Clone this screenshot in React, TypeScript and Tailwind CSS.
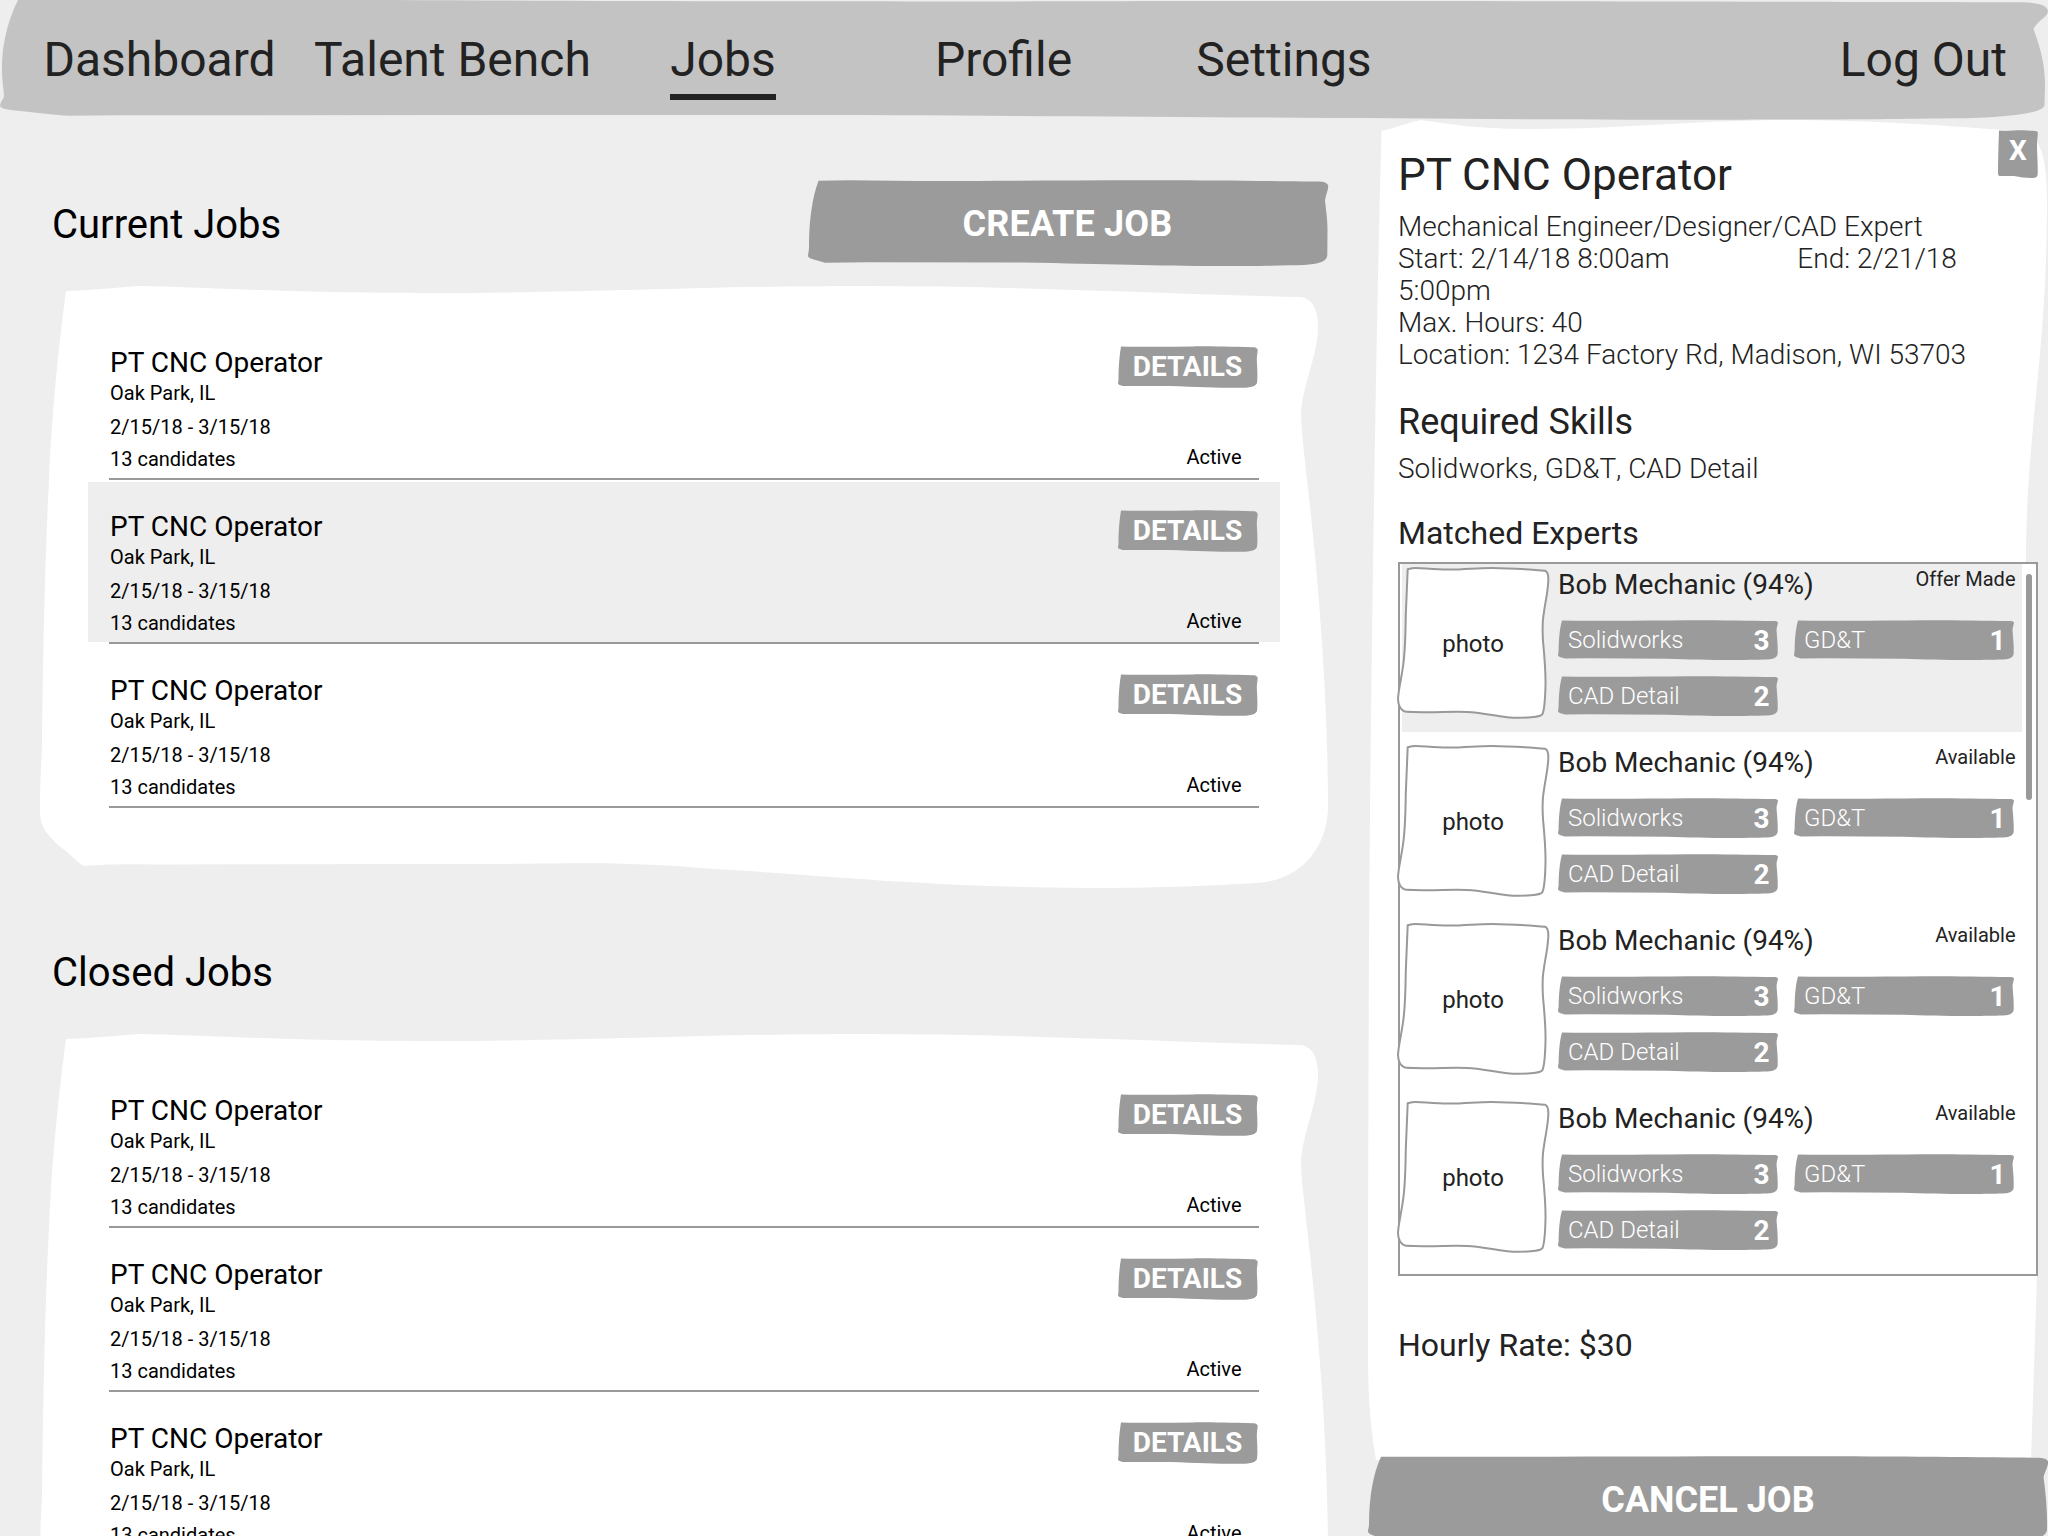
import React from "react";

type SketchProps = { w: number; h: number; d: string; className: string };

/* Hand-drawn, slightly wobbly outline that fills its relative parent. */
function Sketch({ w, h, d, className }: SketchProps) {
  return (
    <svg
      aria-hidden="true"
      viewBox={`0 0 ${w} ${h}`}
      preserveAspectRatio="none"
      className={`pointer-events-none absolute inset-0 h-full w-full overflow-visible ${className}`}
    >
      <path d={d} />
    </svg>
  );
}

const SHAPES = {
  header:
    "M20 -4 C5 25 2 50 2 70 C2 85 5 93 3.5 98 C2 101 0 103 0 106 C1 109 10 110 20 111 C40 113 55 115 69 115.7 L120 115.2 L700 115 C1100 115 1350 119.5 1740 119.7 C1850 119.5 1910 119 1974 118 C2020 116 2044 112 2044.5 105 C2044.5 98 2045 92 2045 85 C2045 60 2038 42 2033.5 29 C2037 21 2048 17 2048 11 C2047 5 2038 2.5 2020 2.3 C1800 2 1400 0.6 1100 1.3 C700 2 500 0.5 200 -1 Z",
  card:
    "M26 5 C60 4 80 1 100 0 C160 1 250 7 390 7 C560 7 660 0 824 0 C980 0 1130 8 1260 11 C1274 12 1278 27 1278 40 C1278 70 1261 103 1261 130 C1262 150 1264 165 1267 194 C1276 270 1288 400 1288 520 C1288 560 1262 595 1216 597 C1150 601 1100 602 1048 602 C880 601 770 588 660 582 C570 575 530 578 451 578 L110 578.5 C70 578 60 579 45 580 C38 578 31 568 18 559 C8 549 0 542 0 525 C0 500 1 480 2 461 C3 370 5 270 9 194 C12 120 20 50 26 5 Z",
  create:
    "M10.5 0.8 C4 18 1 42 1 66 C1 72 0 74 0 76 C1 79 5 79 17 82.7 L60 82.3 L215 82.5 C300 84 350 86 410 86 C450 86 475 85.5 496 85 C510 84 519 82 519.3 75 L519.5 50 C519.5 40 518 30 517 20.5 C518 14 521 8 520 5 C518 2 515 1.8 510 1.6 C450 1 400 0.2 340 0.3 C230 0.2 130 2 42 0.3 Z",
  details:
    "M3 0.4 C1 12 0.5 25 0.5 34 L0 37 C0 39 3 39.5 4.5 40 L52 40 C80 41 105 42 120 41.8 C130 41.8 137 41.5 139 37 C140 30 139 20 138.8 13 C139 8 140 5 139.5 3 C138 1.5 137 1.2 135 1.2 C110 0.8 90 0.2 75 0.4 C50 1 25 1 3 0.4 Z",
  chip:
    "M4 0.4 C1.5 9 0.8 20 0.6 31 L0 35 C0 37 4 37.5 7 38.6 L30 38.2 L109 38.7 C130 39.5 150 40 175 40 C190 40 205 39.8 212 39.3 C217 38.5 219.5 37 219.7 33 C220 25 219 17 218.5 10 C219 6 220 4 220 2.5 C219 1.2 218 1 215 1 C190 0.8 160 0.2 130 0.3 C90 0.6 50 1 4 0.4 Z",
  close:
    "M1 0.4 C0.5 15 0 30 0 44 L1 46 L16 46 C22 47 28 48 33 48 C37 48 39.5 47.5 39.7 44 C40 34 39 24 39 14 C39.3 8 40 5 39.7 2 L38 1 C30 0.5 25 0 20 0.3 C12 1 6 0.8 1 0.4 Z",
  panel:
    "M13.5 11 C30 7 42 2 53 0 C85 5 115 9 165 9 C260 9 330 0 431 0 C520 1 580 6 650 11 C670 13 679 30 679 80 C679 240 658 310 658 442 C660 640 669 900 669 1156 L663 1340 L8 1340 C3 1310 0 1280 0 1235 C0 1020 1 760 3 600 C6 360 9 180 13.5 11 Z",
  cancel:
    "M13 0.8 C5 18 1 42 1 68 C1 72 0 73 0 76 C2 79 7 80 10 81 L240 83 C340 84 400 86 520 86 C580 86 640 86 655 84 C672 83 678 80 679 74 C679.5 58 678 38 675.5 21 C677 15 681 9 680 5 C678 2.5 675 2 670 1.8 C600 1 500 0.2 400 0.3 C270 0.4 150 1 13 0.8 Z",
  photo:
    "M10.7 2.3 C14 1.3 16 0.8 19 0.9 C30 1.5 40 2.7 52 2.6 C70 2.4 80 0.8 95 0.9 C115 1 132 2.6 148 3.7 C151 4.5 151.5 9 151.3 14 C150.5 28 148 36 147 45 C145 55 145.5 66 146 74 C147.5 90 148.8 105 148.5 118 C148.2 132 147.5 142 145.5 147 C144.5 149.3 140 149.8 134 150.3 C125 151 118 151 110 150.2 C96 148.8 84 145.4 70 145 C55 144.4 42 145.4 26 145.2 C18 144.8 12 145.3 8 144.6 C4 143 1.2 139 1 132 C1.5 121 5.5 108 7 91 C8.5 76 8.5 62 8.8 48 Z",
};

const TABS = [
  { label: "Dashboard", cell: "w-[259px]" },
  { label: "Talent Bench", cell: "w-[327px]" },
  { label: "Jobs", cell: "w-[214px]", active: true },
  { label: "Profile", cell: "w-[347px]" },
  { label: "Settings", cell: "w-[214px]" },
];

function Header() {
  return (
    <header className="relative h-[120px] w-full shrink-0 text-[48px] leading-[56px] text-[#222]">
      <Sketch w={2048} h={120} d={SHAPES.header} className="fill-[#c3c3c3]" />
      <nav className="relative flex pt-8 pr-[41px] pl-[30px]">
        {TABS.map((t) => (
          <div key={t.label} className={`flex justify-center whitespace-nowrap ${t.cell}`}>
            <a className={t.active ? "border-b-[6px] border-[#222] pb-1.5" : ""}>{t.label}</a>
          </div>
        ))}
        <a className="ml-auto">Log Out</a>
      </nav>
    </header>
  );
}

function JobRow({ selected = false }: { selected?: boolean }) {
  return (
    <li className="mb-0.5">
      <div className={`flex h-40 justify-between pr-[21px] pl-[22px] pt-7 ${selected ? "bg-[#eee]" : ""}`}>
        <div className="text-[20px] leading-7">
          <h3 className="pt-px text-[28px] leading-8">PT CNC Operator</h3>
          <p>Oak Park, IL</p>
          <p className="mt-1.5">2/15/18 - 3/15/18</p>
          <p className="mt-1">13 candidates</p>
        </div>
        <div className="flex flex-col items-end">
          <button className="relative mr-px h-[42px] w-[140px] pr-px text-[28px] leading-[42px] font-bold text-white">
            <Sketch w={140} h={42} d={SHAPES.details} className="fill-[#9b9b9b]" />
            <span className="relative">DETAILS</span>
          </button>
          <p className="mt-[55px] mr-[17.5px] text-[20px] leading-7">Active</p>
        </div>
      </div>
      <div className="mx-[21px] h-0.5 bg-[#999]" />
    </li>
  );
}

function JobCard({ selectedIndex = -1 }: { selectedIndex?: number }) {
  return (
    <section className="relative ml-10 h-[602px] w-[1288px] shrink-0">
      <Sketch w={1288} h={602} d={SHAPES.card} className="fill-white" />
      <ul className="relative ml-12 w-[1192px] pt-8">
        {[0, 1, 2].map((i) => (
          <JobRow key={i} selected={i === selectedIndex} />
        ))}
      </ul>
    </section>
  );
}

function Chip({ name, level }: { name: string; level: number }) {
  return (
    <div className="relative flex h-10 w-[220px] justify-between pr-[8.5px] pl-[10px] text-white">
      <Sketch w={220} h={40} d={SHAPES.chip} className="fill-[#9b9b9b]" />
      <span className="relative text-[24px] leading-10 font-light">{name}</span>
      <span className="relative text-[28px] leading-[41px] font-bold">{level}</span>
    </div>
  );
}

function Expert({ status, highlighted = false }: { status: string; highlighted?: boolean }) {
  return (
    <li className={`mb-2.5 ml-0.5 flex h-[168px] w-[620px] ${highlighted ? "bg-[#eee]" : ""}`}>
      <div className="relative mt-[3px] -ml-[5px] h-[153px] w-[152px] text-center text-[24px] leading-[155px]">
        <Sketch w={152} h={153} d={SHAPES.photo} className="fill-white stroke-[#999] stroke-2" />
        <span className="relative">photo</span>
      </div>
      <div className="ml-[9px] flex-1">
        <div className="flex h-14 justify-between pr-[6.5px]">
          <h4 className="pt-[3px] text-[28px] leading-9">Bob Mechanic (94%)</h4>
          <span className="pt-px text-[20px] leading-7">{status}</span>
        </div>
        <div className="flex flex-wrap gap-4">
          <Chip name="Solidworks" level={3} />
          <Chip name="GD&T" level={1} />
          <Chip name="CAD Detail" level={2} />
        </div>
      </div>
    </li>
  );
}

function JobPanel() {
  return (
    <aside className="relative flex h-[1416px] w-[680px] shrink-0 flex-col text-[#222]">
      <Sketch w={680} h={1416} d={SHAPES.panel} className="fill-white" />
      <div className="relative pt-2.5 pr-2.5 pl-[30px]">
        <div className="flex h-[71px] justify-between">
          <h1 className="pt-[19px] text-[44px] leading-[52px]">PT CNC Operator</h1>
          <button className="relative h-12 w-10 pb-[7px] text-[28px] leading-[41px] font-bold text-white">
            <Sketch w={40} h={48} d={SHAPES.close} className="fill-[#9b9b9b]" />
            <span className="relative">X</span>
          </button>
        </div>
        <div className="mt-2.5 text-[28px] leading-8 font-light">
          <p>Mechanical Engineer/Designer/CAD Expert</p>
          <p>
            Start: 2/14/18 8:00am <span className="inline-block w-[121px]" />
            End: 2/21/18 5:00pm
          </p>
          <p>Max. Hours: 40</p>
          <p>Location: 1234 Factory Rd, Madison, WI 53703</p>
        </div>
        <h2 className="mt-[29px] text-[36px] leading-[44px]">Required Skills</h2>
        <p className="mt-[9px] text-[28px] leading-8 font-light">
          Solidworks, GD&amp;<span className="tracking-[-0.3px]">T</span>, CAD Detail
        </p>
        <h2 className="mt-7 text-[32px] leading-10">Matched Experts</h2>
        <div className="relative mt-[9px] h-[714px] w-[640px] border-2 border-[#999] bg-white">
          <ul>
            <Expert status="Offer Made" highlighted />
            <Expert status="Available" />
            <Expert status="Available" />
            <Expert status="Available" />
          </ul>
          <div className="absolute top-2.5 right-1 h-[226px] w-1.5 rounded-full bg-[#999]" />
        </div>
        <p className="mt-[49px] text-[32px] leading-10">Hourly Rate: $30</p>
      </div>
      <button className="relative mt-auto h-20 w-full pt-2 text-[36px] leading-[72px] font-bold text-white">
        <Sketch w={680} h={80} d={SHAPES.cancel} className="fill-[#9b9b9b]" />
        <span className="relative">CANCEL JOB</span>
      </button>
    </aside>
  );
}

export default function App() {
  return (
    <div className="flex h-[1536px] w-[2048px] flex-col overflow-hidden bg-[#eee] font-['Roboto',sans-serif] text-black">
      <Header />
      <div className="flex min-h-0 flex-1">
        <main className="flex w-[1368px] shrink-0 flex-col pt-[60px]">
          <div className="flex h-[86px] shrink-0 justify-between pr-10 pl-[52px]">
            <h2 className="pt-[21px] text-[40px] leading-[48px]">Current Jobs</h2>
            <button className="relative h-[86px] w-[520px] pt-0.5 pr-px text-[36px] leading-[84px] font-bold tracking-[0.15px] text-white">
              <Sketch w={520} h={86} d={SHAPES.create} className="fill-[#9b9b9b]" />
              <span className="relative">CREATE JOB</span>
            </button>
          </div>
          <div className="mt-5">
            <JobCard selectedIndex={1} />
          </div>
          <h2 className="mt-[61px] mb-[37px] ml-[52px] text-[40px] leading-[48px]">Closed Jobs</h2>
          <JobCard />
        </main>
        <JobPanel />
      </div>
    </div>
  );
}
